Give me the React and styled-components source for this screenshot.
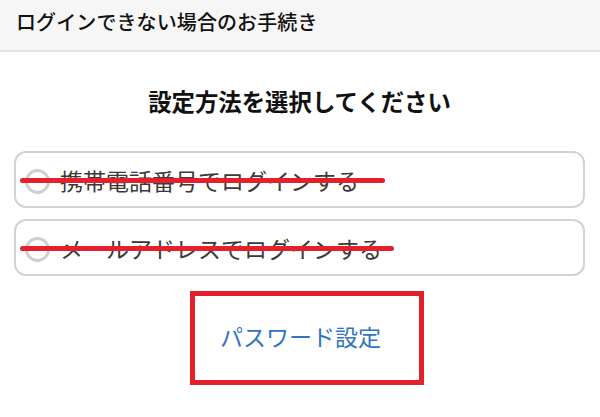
import React from "react";
import styled, { createGlobalStyle } from "styled-components";

const Global = createGlobalStyle`
  html, body { margin: 0; padding: 0; background: #fff; }
  body { font-family: "Noto Sans CJK JP", "Noto Sans", sans-serif; width: 600px; height: 417px; overflow: hidden; }
`;

const Header = styled.header`
  height: 50px;
  background: #f6f6f6;
  border-bottom: 2px solid #e2e2e2;
  display: flex;
  align-items: center;
  padding: 0 16px;
  box-sizing: content-box;
`;

const Title = styled.h1`
  margin: -8px 0 0;
  font-size: 20px;
  font-weight: 500;
  color: #111;
  letter-spacing: 0.1px;
`;

const Main = styled.main`
  padding: 33px 15px 0 14px;
`;

const Heading = styled.h2`
  margin: 0 0 34px;
  text-align: center;
  font-size: 23.4px;
  line-height: 32px;
  font-weight: 700;
  color: #111;
`;

const Options = styled.div`
  display: flex;
  flex-direction: column;
  gap: 11px;
`;

const Option = styled.label`
  position: relative;
  height: 57px;
  box-sizing: border-box;
  border: 2px solid #d3d3d3;
  border-radius: 12px;
  display: flex;
  align-items: center;
  padding-left: 9px;
  gap: 10px;
  color: #3a3a3a;
  font-size: 23px;
  font-weight: 400;
`;

const Radio = styled.span`
  width: 25px;
  height: 25px;
  margin-top: 3px;
  box-sizing: border-box;
  border: 3px solid #cfcfcf;
  border-radius: 50%;
  flex: none;
`;

const Strike = styled.span`
  position: absolute;
  left: 4px;
  top: 50%;
  height: 5px;
  margin-top: -2px;
  border-radius: 3px;
  background: #e3202b;
`;

const ButtonArea = styled.div`
  position: relative;
  margin-top: 15px;
  height: 94px;
  display: flex;
  align-items: center;
  justify-content: center;
`;

const LinkButton = styled.span`
  color: #2f74c0;
  font-size: 23px;
  margin-top: -4px;
  margin-left: 2px;
`;

const Frame = styled.span`
  position: absolute;
  left: 176px;
  top: 0;
  width: 234px;
  height: 94px;
  box-sizing: border-box;
  border: 5px solid #e3202b;
`;

const options = [
  { label: "携帯電話番号でログインする", strike: 365 },
  { label: "メールアドレスでログインする", strike: 374 },
];

export default function App() {
  return (
    <>
      <Global />
      <Header>
        <Title>ログインできない場合のお手続き</Title>
      </Header>
      <Main>
        <Heading>設定方法を選択してください</Heading>
        <Options>
          {options.map((o) => (
            <Option key={o.label}>
              <Radio />
              {o.label}
              <Strike style={{ width: o.strike }} />
            </Option>
          ))}
        </Options>
        <ButtonArea>
          <LinkButton>パスワード設定</LinkButton>
          <Frame />
        </ButtonArea>
      </Main>
    </>
  );
}
